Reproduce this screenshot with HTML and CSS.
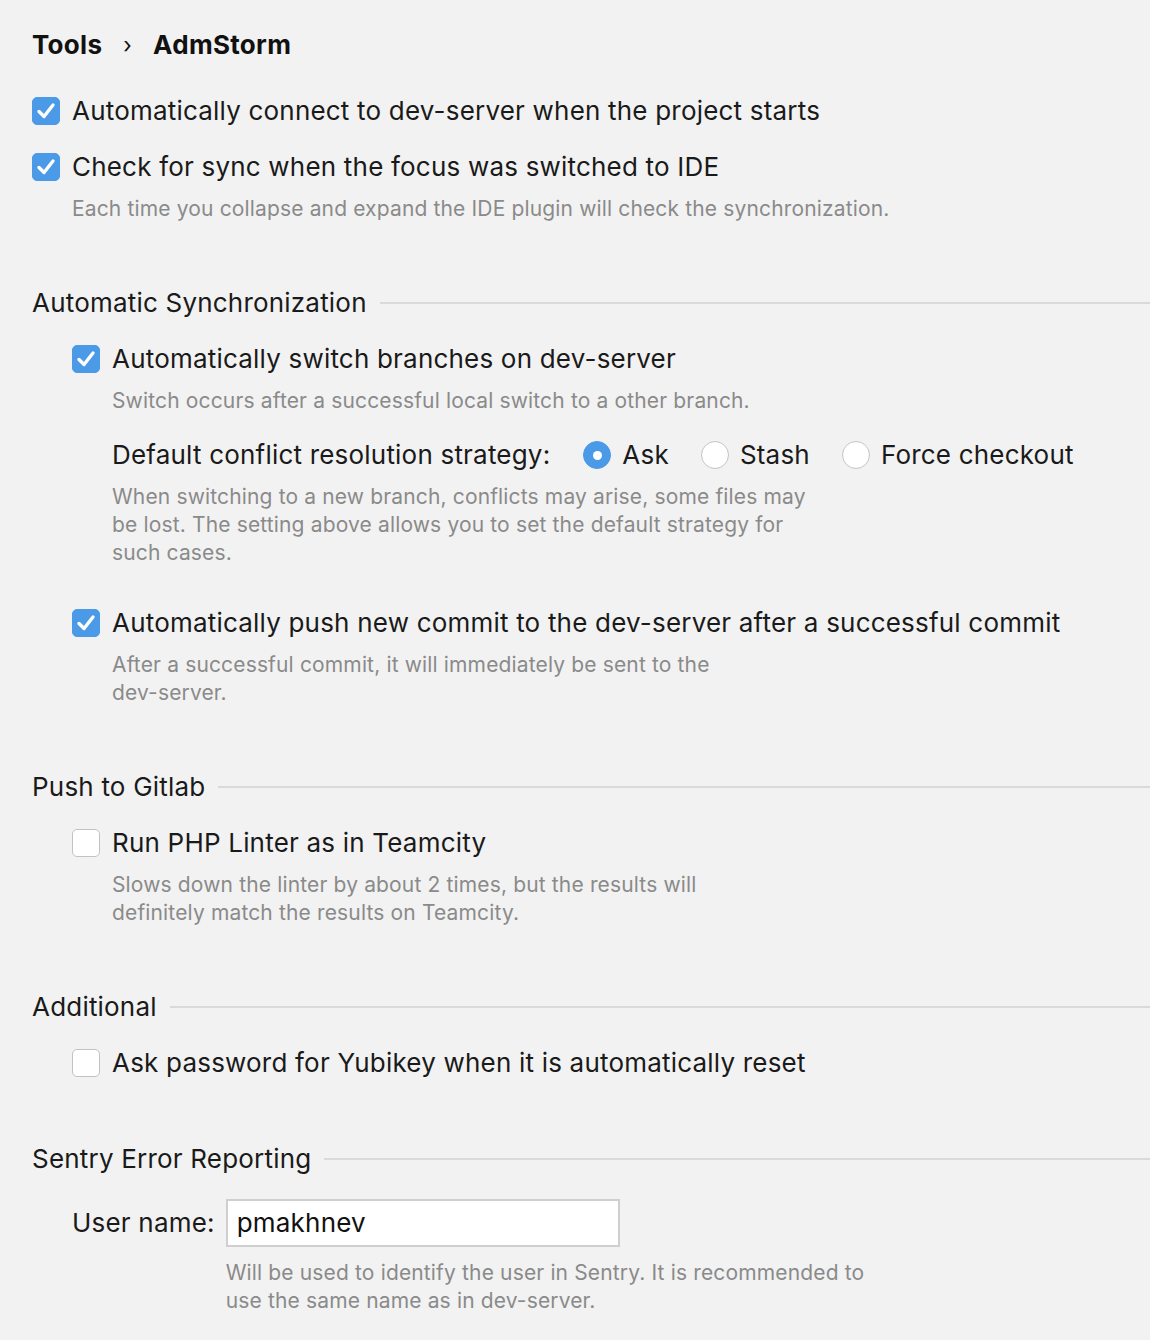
FILE: index.html
```html
<!DOCTYPE html>
<html>
<head>
<meta charset="utf-8">
<link rel="stylesheet" href="styles.css">
</head>
<body>
<div class="page">
  <div class="crumbs"><span>Tools</span><span class="sep">›</span><span>AdmStorm</span></div>

  <div class="row mt-26">
    <span class="cb on"><svg viewBox="0 0 28 28"><path d="M7 14.5 L12 19.5 L21 8"/></svg></span>
    <span class="label">Automatically connect to dev-server when the project starts</span>
  </div>
  <div class="row mt-16">
    <span class="cb on"><svg viewBox="0 0 28 28"><path d="M7 14.5 L12 19.5 L21 8"/></svg></span>
    <span class="label">Check for sync when the focus was switched to IDE</span>
  </div>
  <p class="desc ind1 mt-8">Each time you collapse and expand the IDE plugin will check the synchronization.</p>

  <div class="section mt-60"><span class="stitle">Automatic Synchronization</span><span class="rule"></span></div>
  <div class="nested">
    <div class="row mt-16">
      <span class="cb on"><svg viewBox="0 0 28 28"><path d="M7 14.5 L12 19.5 L21 8"/></svg></span>
      <span class="label">Automatically switch branches on dev-server</span>
    </div>
    <p class="desc ind1 mt-8">Switch occurs after a successful local switch to a other branch.</p>
    <div class="row ind1 mt-20">
      <span class="label">Default conflict resolution strategy:</span>
      <div class="radios">
        <span class="ropt"><span class="radio on"></span><span class="label">Ask</span></span>
        <span class="ropt"><span class="radio"></span><span class="label">Stash</span></span>
        <span class="ropt"><span class="radio"></span><span class="label">Force checkout</span></span>
      </div>
    </div>
    <p class="desc ind1 mt-8 w700">When switching to a new branch, conflicts may arise, some files may be lost. The setting above allows you to set the default strategy for such cases.</p>
    <div class="row mt-36">
      <span class="cb on"><svg viewBox="0 0 28 28"><path d="M7 14.5 L12 19.5 L21 8"/></svg></span>
      <span class="label">Automatically push new commit to the dev-server after a successful commit</span>
    </div>
    <p class="desc ind1 mt-8 w610">After a successful commit, it will immediately be sent to the dev-server.</p>
  </div>

  <div class="section mt-60"><span class="stitle">Push to Gitlab</span><span class="rule"></span></div>
  <div class="nested">
    <div class="row mt-16">
      <span class="cb"></span>
      <span class="label">Run PHP Linter as in Teamcity</span>
    </div>
    <p class="desc ind1 mt-8 w610">Slows down the linter by about 2 times, but the results will definitely match the results on Teamcity.</p>
  </div>

  <div class="section mt-60"><span class="stitle">Additional</span><span class="rule"></span></div>
  <div class="nested">
    <div class="row mt-16">
      <span class="cb"></span>
      <span class="label">Ask password for Yubikey when it is automatically reset</span>
    </div>
  </div>

  <div class="section mt-56"><span class="stitle">Sentry Error Reporting</span><span class="rule"></span></div>
  <div class="nested">
    <div class="form mt-20">
      <span class="label flabel">User name:</span>
      <div class="fcol">
        <div class="input">pmakhnev</div>
        <p class="desc mt-12 w650">Will be used to identify the user in Sentry. It is recommended to use the same name as in dev-server.</p>
      </div>
    </div>
  </div>
</div>
</body>
</html>
```

FILE: styles.css
```css
html, body {
  margin: 0;
  padding: 0;
  background: #f2f2f2;
}
body {
  font-family: Inter, "Noto Sans", "Liberation Sans", sans-serif;
  color: #1a1a1a;
  width: 1150px;
  height: 1340px;
  overflow: hidden;
}
.page {
  padding: 25px 0 0 32px;
}
.crumbs {
  display: flex;
  align-items: center;
  gap: 22px;
  font-size: 26px;
  font-weight: 700;
  line-height: 40px;
  height: 40px;
  color: #111;
  padding-left: 0;
  letter-spacing: 0.3px;
}
.crumbs .sep {
  font-weight: 400;
  font-size: 22px;
  margin: 0 -1px;
}
.row {
  display: flex;
  align-items: center;
  height: 40px;
}
.label {
  font-size: 26px;
  line-height: 40px;
  color: #1a1a1a;
  white-space: nowrap;
  letter-spacing: 0.2px;
}
.cb {
  width: 26px;
  height: 26px;
  border: 1px solid #c2c2c2;
  border-radius: 5px;
  background: #ffffff;
  margin-right: 12px;
  flex: none;
  display: flex;
  align-items: center;
  justify-content: center;
}
.cb.on {
  background: #4a9ae8;
  border-color: #4a9ae8;
}
.cb svg {
  width: 28px;
  height: 28px;
  flex: none;
}
.cb svg path {
  fill: none;
  stroke: #fff;
  stroke-width: 3.4;
  stroke-linecap: round;
  stroke-linejoin: round;
}
.desc {
  margin-bottom: 0;
  font-size: 21px;
  line-height: 28px;
  color: #8a8a8a;
  letter-spacing: 0.15px;
}
.ind1 { margin-left: 40px; }
.nested { margin-left: 40px; }
.w700 { max-width: 705px; }
.w610 { max-width: 615px; }
.w650 { max-width: 660px; }
.mt-8 { margin-top: 8px; }
.mt-12 { margin-top: 12px; }
.mt-16 { margin-top: 16px; }
.mt-20 { margin-top: 20px; }
.mt-26 { margin-top: 26px; }
.mt-36 { margin-top: 36px; }
.mt-56 { margin-top: 56px; }
.mt-60 { margin-top: 60px; }
p { margin: 0; }
.section {
  display: flex;
  align-items: center;
  height: 40px;
}
.stitle {
  font-size: 26px;
  line-height: 40px;
  color: #1a1a1a;
  padding-left: 0;
  white-space: nowrap;
  letter-spacing: 0.2px;
}
.rule {
  flex: 1;
  height: 2px;
  background: #dadada;
  margin-left: 13px;
}
.radios {
  display: flex;
  align-items: center;
  gap: 32px;
  margin-left: 33px;
}
.ropt {
  display: flex;
  align-items: center;
  gap: 11px;
}
.radio {
  width: 28px;
  height: 28px;
  border: 1.5px solid #c4c4c4;
  border-radius: 50%;
  background: #fff;
  box-sizing: border-box;
  flex: none;
}
.radio.on {
  background: #4a9ae8;
  border-color: #4a9ae8;
  position: relative;
}
.radio.on::after {
  content: "";
  position: absolute;
  left: 50%;
  top: 50%;
  width: 9px;
  height: 9px;
  margin: -4.5px 0 0 -4.5px;
  border-radius: 50%;
  background: #fff;
}
.form {
  display: flex;
  align-items: flex-start;
}
.flabel {
  line-height: 48px;
  margin-right: 11px;
}
.fcol {
  display: flex;
  flex-direction: column;
}
.input {
  width: 394px;
  height: 48px;
  box-sizing: border-box;
  border: 2px solid #cfcfcf;
  background: #fff;
  font-size: 26px;
  line-height: 44px;
  padding-left: 9px;
  color: #111;
  letter-spacing: 0.2px;
}
```
